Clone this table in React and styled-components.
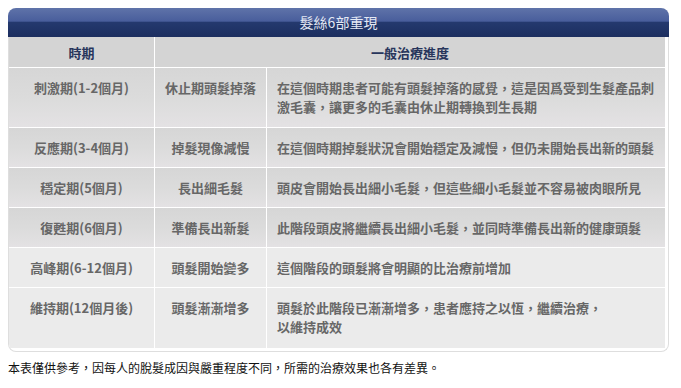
import React from 'react';
import styled, { createGlobalStyle } from 'styled-components';

const GlobalStyle = createGlobalStyle`
  body {
    margin: 8px;
    background: #fff;
    font-family: "Noto Sans CJK TC", "Liberation Sans", sans-serif;
  }
`;

const Panel = styled.div`
  width: 661px;
`;

const TitleBar = styled.div`
  height: 29px;
  line-height: 29px;
  border-radius: 8px 8px 0 0;
  background: linear-gradient(
    to bottom,
    #5f73a9 0%,
    #495e9c 45%,
    #24396e 50%,
    #1c2e5f 100%
  );
  color: #e4e9f4;
  font-size: 14px;
  text-align: center;
`;

const TableBox = styled.div`
  border: 1px solid #dedede;
  border-top: none;
  border-radius: 0 0 8px 8px;
  padding: 0 3px 3px 0;
  overflow: hidden;
`;

const Table = styled.table`
  width: 656px;
  border-collapse: separate;
  border-spacing: 0;
  table-layout: fixed;
`;

const HeadCell = styled.th`
  height: 30px;
  padding: 0;
  background: #d4d4d4;
  color: #28365c;
  font-size: 13px;
  font-weight: 700;
  text-align: center;
  border-right: ${(p) => (p.$last ? 'none' : '1px solid #fff')};
  border-bottom: 1px solid #fff;
`;

const Row = styled.tr`
  background: ${(p) =>
    p.$flat
      ? '#ebebeb'
      : 'linear-gradient(to bottom, #d6d6d6 0%, #dcdcdc 55%, #e4e2e4 100%)'};
`;

const Cell = styled.td`
  padding: 10px ${(p) => (p.$align === 'left' ? '6px' : '4px')} ${(p) => p.$bottom || 10}px
    ${(p) => (p.$align === 'left' ? '10px' : '4px')};
  vertical-align: top;
  text-align: ${(p) => p.$align || 'center'};
  color: #676767;
  font-size: 13px;
  font-weight: 700;
  line-height: 19px;
  border-right: ${(p) => (p.$last ? 'none' : '1px solid #fff')};
  border-bottom: ${(p) => (p.$end ? 'none' : '1px solid #fff')};
`;

const Note = styled.p`
  margin: 8px 0 0;
  font-size: 12px;
  line-height: 16px;
  color: #111;
`;

const rows = [
  {
    period: '刺激期(1-2個月)',
    stage: '休止期頭髮掉落',
    detail: ['在這個時期患者可能有頭髮掉落的感覺，這是因爲受到生髮產品刺', '激毛囊，讓更多的毛囊由休止期轉換到生長期'],
    bottom: 11,
  },
  { period: '反應期(3-4個月)', stage: '掉髮現像減慢', detail: ['在這個時期掉髮狀況會開始穩定及減慢，但仍未開始長出新的頭髮'] },
  { period: '穩定期(5個月)', stage: '長出細毛髮', detail: ['頭皮會開始長出細小毛髮，但這些細小毛髮並不容易被肉眼所見'] },
  { period: '復甦期(6個月)', stage: '準備長出新髮', detail: ['此階段頭皮將繼續長出細小毛髮，並同時準備長出新的健康頭髮'] },
  { period: '高峰期(6-12個月)', stage: '頭髮開始變多', detail: ['這個階段的頭髮將會明顯的比治療前增加'], flat: true },
  {
    period: '維持期(12個月後)',
    stage: '頭髮漸漸增多',
    detail: ['頭髮於此階段已漸漸增多，患者應持之以恆，繼續治療，', '以維持成效'],
    flat: true,
    bottom: 12,
  },
];

export default function App() {
  return (
    <>
      <GlobalStyle />
      <Panel>
        <TitleBar>髮絲6部重現</TitleBar>
        <TableBox>
          <Table>
            <colgroup>
              <col style={{ width: 146 }} />
              <col style={{ width: 112 }} />
              <col style={{ width: 398 }} />
            </colgroup>
            <thead>
              <tr>
                <HeadCell>時期</HeadCell>
                <HeadCell colSpan={2} $last>一般治療進度</HeadCell>
              </tr>
            </thead>
            <tbody>
              {rows.map((r, i) => {
                const end = i === rows.length - 1;
                return (
                  <Row key={r.period} $flat={r.flat}>
                    <Cell $end={end} $bottom={r.bottom}>{r.period}</Cell>
                    <Cell $end={end} $bottom={r.bottom}>{r.stage}</Cell>
                    <Cell $end={end} $bottom={r.bottom} $last $align="left">
                      {r.detail.map((line, j) => (
                        <React.Fragment key={j}>
                          {j > 0 && <br />}
                          {line}
                        </React.Fragment>
                      ))}
                    </Cell>
                  </Row>
                );
              })}
            </tbody>
          </Table>
        </TableBox>
      </Panel>
      <Note>本表僅供參考，因每人的脫髮成因與嚴重程度不同，所需的治療效果也各有差異。</Note>
    </>
  );
}
